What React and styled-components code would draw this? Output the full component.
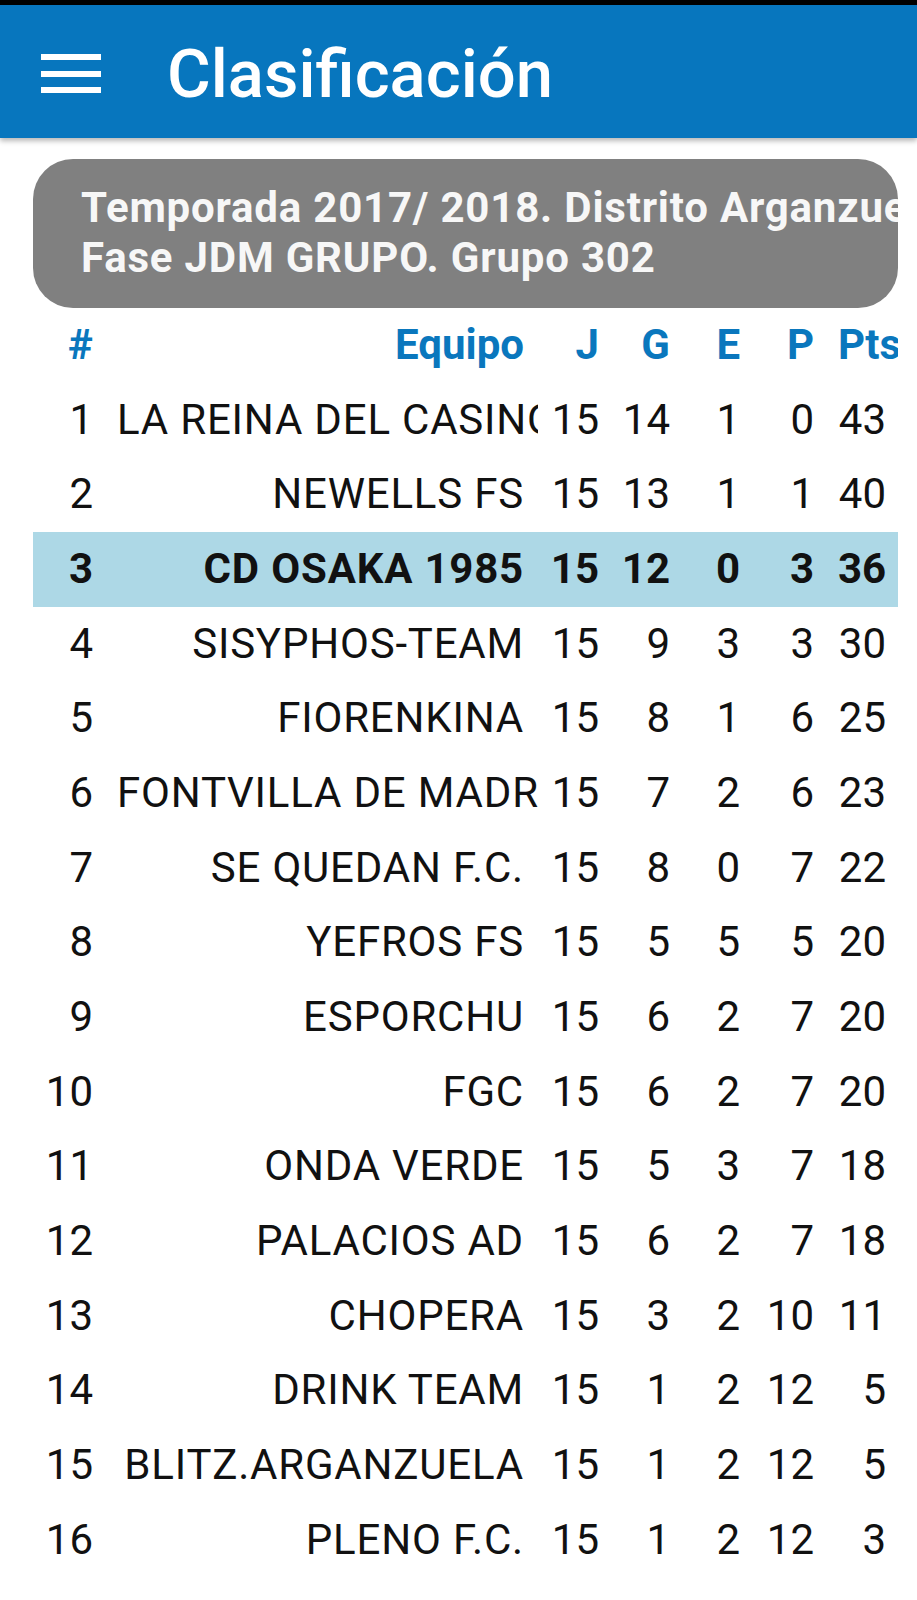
import React from "react";
import styled, { createGlobalStyle } from "styled-components";

const GlobalStyle = createGlobalStyle`
  html, body {
    margin: 0;
    padding: 0;
    background: #ffffff;
    font-family: Roboto, "Noto Sans", "Liberation Sans", sans-serif;
  }
`;

const Page = styled.div`
  width: 917px;
  min-height: 1600px;
  background: #ffffff;
  overflow: hidden;
`;

const StatusBar = styled.div`
  height: 5px;
  background: #000000;
`;

const AppBar = styled.header`
  height: 133px;
  box-sizing: border-box;
  padding: 4px 0 0 41px;
  background: #0776be;
  display: flex;
  align-items: center;
  gap: 66px;
  box-shadow: 0 3px 5px rgba(0, 0, 0, 0.28);
  position: relative;
  z-index: 1;
`;

const Burger = styled.div`
  width: 60px;
  display: flex;
  flex-direction: column;
  gap: 10.5px;
`;

const BurgerBar = styled.span`
  display: block;
  height: 6px;
  background: #ffffff;
`;

const Title = styled.h1`
  margin: 0;
  font-size: 67px;
  font-weight: 500;
  color: #ffffff;
  letter-spacing: 0;
`;

const Content = styled.main`
  padding: 21px 19px 0 33px;
`;

const Banner = styled.div`
  height: 149px;
  box-sizing: border-box;
  padding: 24px 0 24px 48px;
  background: #808080;
  border-radius: 40px;
  overflow: hidden;
  color: #f7f7f7;
  font-weight: 700;
  font-size: 42px;
  letter-spacing: 0.8px;
  line-height: 50px;
  white-space: nowrap;
`;

const BannerLine = styled.div``;

const Row = styled.div`
  display: grid;
  grid-template-columns: 60px 445px 61px 71px 70px 74px 84px;
  height: 74.67px;
  line-height: 74.67px;
  font-size: 42px;
  font-weight: ${(p) => (p.$strong ? 700 : 400)};
  color: ${(p) => (p.$head ? "#0a77bd" : "#111111")};
  background: ${(p) => (p.$active ? "#add8e6" : "transparent")};
`;

const Cell = styled.div`
  text-align: right;
  white-space: nowrap;
  overflow: hidden;
`;

const TeamCell = styled(Cell)`
  padding: 0 14px 0 24px;
  letter-spacing: ${(p) => (p.$head ? "0" : "0.8px")};
`;

const PtsCell = styled(Cell)`
  padding: 0 12px 0 24px;
`;

const rows = [
  [1, "LA REINA DEL CASINO", 15, 14, 1, 0, 43],
  [2, "NEWELLS FS", 15, 13, 1, 1, 40],
  [3, "CD OSAKA 1985", 15, 12, 0, 3, 36],
  [4, "SISYPHOS-TEAM", 15, 9, 3, 3, 30],
  [5, "FIORENKINA", 15, 8, 1, 6, 25],
  [6, "FONTVILLA DE MADRID", 15, 7, 2, 6, 23],
  [7, "SE QUEDAN F.C.", 15, 8, 0, 7, 22],
  [8, "YEFROS FS", 15, 5, 5, 5, 20],
  [9, "ESPORCHU", 15, 6, 2, 7, 20],
  [10, "FGC", 15, 6, 2, 7, 20],
  [11, "ONDA VERDE", 15, 5, 3, 7, 18],
  [12, "PALACIOS AD", 15, 6, 2, 7, 18],
  [13, "CHOPERA", 15, 3, 2, 10, 11],
  [14, "DRINK TEAM", 15, 1, 2, 12, 5],
  [15, "BLITZ.ARGANZUELA", 15, 1, 2, 12, 5],
  [16, "PLENO F.C.", 15, 1, 2, 12, 3],
];

const HIGHLIGHT = 3;

function TableRow({ cells, head, active }) {
  const [pos, team, j, g, e, p, pts] = cells;
  return (
    <Row $head={head} $strong={head || active} $active={active}>
      <Cell>{pos}</Cell>
      <TeamCell $head={head}>{team}</TeamCell>
      <Cell>{j}</Cell>
      <Cell>{g}</Cell>
      <Cell>{e}</Cell>
      <Cell>{p}</Cell>
      <PtsCell>{pts}</PtsCell>
    </Row>
  );
}

export default function App() {
  return (
    <Page>
      <GlobalStyle />
      <StatusBar />
      <AppBar>
        <Burger>
          <BurgerBar />
          <BurgerBar />
          <BurgerBar />
        </Burger>
        <Title>Clasificación</Title>
      </AppBar>
      <Content>
        <Banner>
          <BannerLine>Temporada 2017/ 2018. Distrito Arganzuela</BannerLine>
          <BannerLine>Fase JDM GRUPO. Grupo 302</BannerLine>
        </Banner>
        <TableRow head cells={["#", "Equipo", "J", "G", "E", "P", "Pts"]} />
        {rows.map((r) => (
          <TableRow key={r[0]} cells={r} active={r[0] === HIGHLIGHT} />
        ))}
      </Content>
    </Page>
  );
}
